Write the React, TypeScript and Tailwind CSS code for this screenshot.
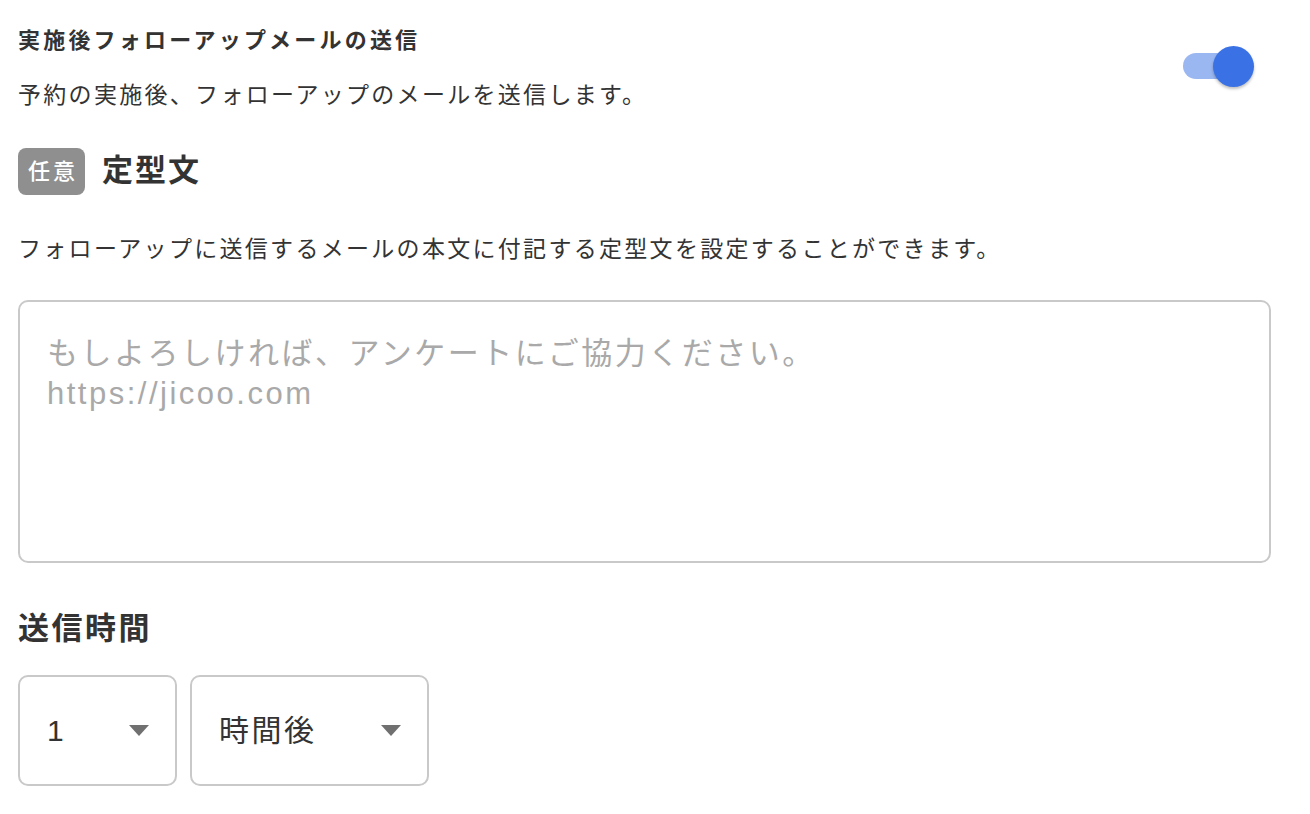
import { useState } from 'react'

const font = { fontFamily: '"Liberation Sans", "Noto Sans CJK JP", sans-serif' }

function Caret() {
  return (
    <svg width="20" height="11" viewBox="0 0 20 11" className="shrink-0">
      <path d="M0 0 L20 0 L10 11 Z" fill="#707070" />
    </svg>
  )
}

function Select({ value, width }: { value: string; width: string }) {
  return (
    <div
      className={`flex h-[111px] ${width} items-center justify-between rounded-[10px] border-2 border-[#c9c9c9] pl-[27px] pr-[26px]`}
    >
      <span className="text-[30px] tracking-[2.5px] text-[#333]">{value}</span>
      <Caret />
    </div>
  )
}

export default function App() {
  const [enabled, setEnabled] = useState(true)

  return (
    <div className="min-h-screen bg-white px-[18px] pt-[26px] text-[#333]" style={font}>
      {/* Header row with toggle */}
      <div className="flex items-start justify-between">
        <div>
          <h2 className="text-[22px] font-bold leading-[30px] tracking-[3.2px]">
            実施後フォローアップメールの送信
          </h2>
          <p className="mt-[24px] text-[23px] leading-[30px] tracking-[2.3px]">
            予約の実施後、フォローアップのメールを送信します。
          </p>
        </div>
        <button
          onClick={() => setEnabled(!enabled)}
          className="relative mr-[38px] mt-[20px] h-[41px] w-[74px]"
          aria-label="toggle"
        >
          <span
            className={`absolute left-[3px] top-[7px] h-[26px] w-[62px] rounded-full ${
              enabled ? 'bg-[#9bb7f1]' : 'bg-gray-300'
            }`}
          />
          <span
            className={`absolute top-0 h-[41px] w-[41px] rounded-full shadow-[0_2px_3px_rgba(0,0,0,0.25)] ${
              enabled ? 'left-[33px] bg-[#3a72e6]' : 'left-0 bg-white'
            }`}
          />
        </button>
      </div>

      {/* 定型文 */}
      <div className="mt-[38px] flex h-[47px] items-center gap-[17px]">
        <span className="flex h-[47px] w-[67px] items-center justify-center rounded-[8px] bg-[#8f8f8f] pl-[3px] text-[22px] font-medium tracking-[3px] text-white">
          任意
        </span>
        <h3 className="text-[31px] font-bold tracking-[2px]">定型文</h3>
      </div>
      <p className="mt-[39px] text-[23px] leading-[30px] tracking-[2.3px]">
        フォローアップに送信するメールの本文に付記する定型文を設定することができます。
      </p>

      <textarea
        className="mt-[36px] block h-[263px] w-[1253px] resize-none rounded-[10px] border-2 border-[#c9c9c9] px-[27px] pt-[32px] text-[31px] leading-[40px] tracking-[2.5px] placeholder:text-[#a9a9a9] focus:outline-none"
        placeholder={'もしよろしければ、アンケートにご協力ください。\nhttps://jicoo.com'}
        style={font}
      />

      {/* 送信時間 */}
      <h3 className="mt-[45px] text-[31px] font-bold leading-[42px] tracking-[2.5px]">送信時間</h3>
      <div className="mt-[25px] flex gap-[13px]">
        <Select value="1" width="w-[159px]" />
        <Select value="時間後" width="w-[239px]" />
      </div>
    </div>
  )
}
